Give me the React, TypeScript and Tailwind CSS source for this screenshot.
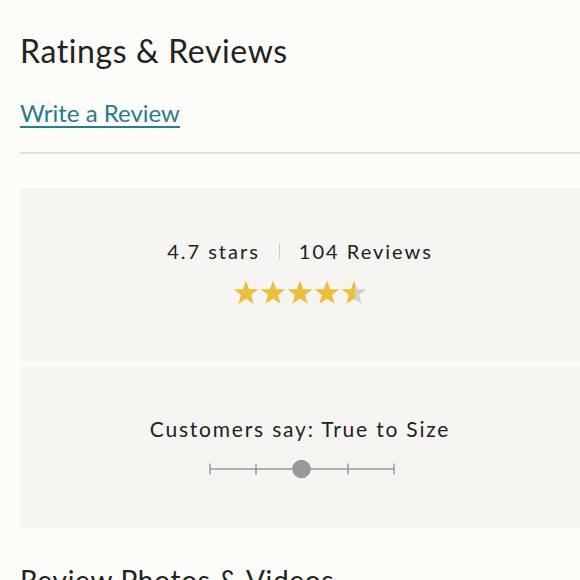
import React from "react";

const font = { fontFamily: "Lato, 'Open Sans', sans-serif" };

function Star({ fill }: { fill: number }) {
  const id = `g${Math.round(fill * 100)}`;
  return (
    <svg width="26" height="25" viewBox="0 0 24 23">
      <defs>
        <linearGradient id={id} x1="0" x2="1" y1="0" y2="0">
          <stop offset={fill} stopColor="#ecbe3a" />
          <stop offset={fill} stopColor="#d0d0d0" />
        </linearGradient>
      </defs>
      <polygon
        points="12,0.5 14.9,8.4 23.3,8.6 16.7,13.8 19.1,21.9 12,17.2 4.9,21.9 7.3,13.8 0.7,8.6 9.1,8.4"
        fill={`url(#${id})`}
      />
    </svg>
  );
}

export default function App() {
  return (
    <div className="w-[580px] h-[580px] overflow-hidden bg-[#fcfcf9] pl-5 text-[#222]" style={font}>
      <h2 className="pt-[31px] text-[32px] leading-[40px] tracking-[0.6px]">Ratings &amp; Reviews</h2>
      <a className="mt-[27px] block w-fit text-[24px] leading-[30px] tracking-[0px] text-[#2b7b8c] underline underline-offset-[4px] decoration-[1.5px]">
        Write a Review
      </a>
      <div className="mt-[24px] h-[2px] bg-[#e2e1de]" />
      <div className="mt-[34px] h-[173px] bg-[#f6f5f2] flex flex-col items-center pt-[50px]">
        <div className="flex items-center text-[20px] leading-[26px] tracking-[2px]">
          <span>4.7 stars</span>
          <span className="mx-[19px] h-[16px] w-px bg-[#cfcfcf]" />
          <span>104 Reviews</span>
        </div>
        <div className="mt-[16px] flex gap-px">
          <Star fill={1} />
          <Star fill={1} />
          <Star fill={1} />
          <Star fill={1} />
          <Star fill={0.55} />
        </div>
      </div>
      <div className="mt-[5px] h-[162px] bg-[#f6f5f2] flex flex-col items-center pt-[50px]">
        <div className="text-[21px] leading-[26px] tracking-[1.8px]">Customers say: True to Size</div>
        <svg width="186" height="22" viewBox="0 0 186 22" className="mt-[16px] ml-[4px]">
          <line x1="1" y1="11" x2="185" y2="11" stroke="#999" strokeWidth="1.5" />
          {[1, 47, 139, 185].map((x) => (
            <line key={x} x1={x} y1="5.5" x2={x} y2="16.5" stroke="#999" strokeWidth="1.5" />
          ))}
          <circle cx="92.5" cy="11" r="9.3" fill="#999" />
        </svg>
      </div>
      <h2 className="mt-[32px] whitespace-nowrap text-[28px] leading-[40px] tracking-[0.7px]">Review Photos &amp; Videos</h2>
    </div>
  );
}
